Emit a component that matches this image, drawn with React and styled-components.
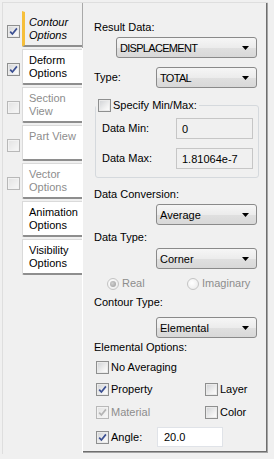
import React from 'react';
import styled, { createGlobalStyle } from 'styled-components';

const GlobalStyle = createGlobalStyle`
  html, body {
    margin: 0;
    padding: 0;
    background: #f0f0f0;
  }
  body {
    font-family: "Liberation Sans", Arial, sans-serif;
    font-size: 11px;
    color: #000;
  }
`;

const Frame = styled.div`
  margin: 2px 0 0 2px;
  width: 266px;
  height: 452px;
  box-sizing: border-box;
  border-left: 1px solid #dedede;
  border-top: 1px solid #dedede;
  display: flex;
`;

const TabColumn = styled.div`
  width: 79px;
  flex: none;
  padding-top: 8px;
  box-sizing: border-box;
`;

const TabRow = styled.div`
  display: grid;
  grid-template-columns: 13px 60px;
  column-gap: 2px;
  padding-left: 4px;
  height: 38px;
`;

const Tab = styled.div`
  height: 36px;
  box-sizing: border-box;
  padding: 4px 0 0 ${p => (p.$active ? 4 : 6)}px;
  line-height: 13px;
  background: ${p => (p.$active ? '#f0f0f0' : '#ffffff')};
  border-top: 1px solid ${p => (p.$active ? '#f0f0f0' : '#dadada')};
  border-left: ${p => (p.$active ? '3px solid #f6bf3a' : '1px solid #dadada')};
  border-bottom: 2px solid #8e8e8e;
  border-bottom-left-radius: 2px;
  font-style: ${p => (p.$active ? 'italic' : 'normal')};
  color: ${p => (p.$disabled ? '#8d8d8d' : '#000')};
`;

const Panel = styled.div`
  width: 186px;
  height: 450px;
  flex: none;
  box-sizing: border-box;
  border-left: 1px solid;
  border-image: linear-gradient(to bottom, #a9a9a9 46px, #ffffff 46px) 1;
  box-shadow: inset -1px -1px 0 #a4a4a4, inset -2px -2px 0 #6e6e6e;
`;

const Content = styled.div`
  display: flex;
  flex-direction: column;
  padding: 18px 11px 0 11px;
`;

const Label = styled.div`
  line-height: 13px;
  height: 13px;
  white-space: nowrap;
  margin-top: ${p => p.$mt || 0}px;
  color: ${p => (p.$disabled ? '#8d8d8d' : '#000')};
`;

const SelectBox = styled.div`
  align-self: flex-end;
  flex: none;
  width: ${p => p.$w}px;
  height: 21px;
  box-sizing: border-box;
  margin-top: ${p => p.$mt || 0}px;
  border: 1px solid #8a8a8a;
  border-radius: 3px;
  background: linear-gradient(#f6f6f6, #ececec 50%, #e0e0e0 51%, #d8d8d8);
  display: flex;
  align-items: center;
  justify-content: space-between;
  padding: 0 7px 0 3px;
  letter-spacing: ${p => (p.$tight ? '-0.7px' : '0')};
  white-space: nowrap;
`;

const Arrow = styled.svg`
  margin-top: 1px;
  flex: none;
`;

const FieldRow = styled.div`
  display: flex;
  align-items: center;
  justify-content: space-between;
  height: 21px;
  margin-top: ${p => p.$mt || 0}px;
`;

const Group = styled.div`
  display: flex;
  flex-direction: column;
  margin: 17px -2px 0 1px;
  border: 1px solid #d5d9dd;
  border-radius: 3px;
  padding: 0 5px 8px 0;
`;

const Legend = styled.div`
  align-self: flex-start;
  display: flex;
  align-items: center;
  gap: 2px;
  height: 13px;
  line-height: 13px;
  margin-top: -7px;
  padding: 0 2px;
  background: #f0f0f0;
`;

const GroupRow = styled.div`
  display: grid;
  grid-template-columns: 74px 1fr;
  align-items: center;
  padding-left: 6px;
  margin-top: ${p => p.$mt || 0}px;
`;

const Input = styled.div`
  height: ${p => p.$h || 21}px;
  box-sizing: border-box;
  border: 1px solid ${p => (p.$readOnly ? '#c6c6c6' : '#e0e3e8')};
  background: ${p => (p.$readOnly ? '#f0f0f0' : '#ffffff')};
  padding-left: ${p => p.$pad || 5}px;
  display: flex;
  align-items: center;
  width: ${p => (p.$w ? `${p.$w}px` : 'auto')};
`;

const RadioRow = styled.div`
  display: grid;
  grid-template-columns: 80px auto;
  padding-left: 13px;
  height: 13px;
  margin-top: ${p => p.$mt || 0}px;
`;

const Item = styled.div`
  display: flex;
  align-items: center;
  gap: ${p => p.$gap || 2}px;
  line-height: 13px;
  white-space: nowrap;
  color: ${p => (p.$disabled ? '#8d8d8d' : '#000')};
`;

const RadioDot = styled.span`
  width: 12px;
  height: 12px;
  flex: none;
  box-sizing: border-box;
  border-radius: 50%;
  border: 1px solid #c4c4c4;
  background: radial-gradient(circle at 40% 40%, #ffffff, #e8e8e8);
  display: flex;
  align-items: center;
  justify-content: center;

  &::after {
    content: '';
    width: 6px;
    height: 6px;
    border-radius: 50%;
    background: radial-gradient(circle at 40% 40%, #d0d0d0, #9a9a9a);
    display: ${p => (p.$on ? 'block' : 'none')};
  }
`;

const CheckGrid = styled.div`
  display: grid;
  grid-template-columns: ${p => p.$cols || '109px auto'};
  align-items: center;
  padding-left: 2px;
  height: ${p => p.$h || 13}px;
  margin-top: ${p => p.$mt || 0}px;
`;

const Box = styled.span`
  flex: none;
  width: 13px;
  height: 13px;
  box-sizing: border-box;
  margin-top: ${p => p.$mt || 0}px;
  border: 1px solid ${p => (p.$dim ? '#b8b8b8' : '#8e8f8f')};
  background: ${p =>
    p.$dim
      ? 'linear-gradient(135deg, #e2e2e2, #f8f8f8)'
      : 'linear-gradient(135deg, #cfd1d4, #f2f2f2 65%, #ffffff)'};
  box-shadow: inset 0 0 0 1px ${p => (p.$dim ? '#f2f2f2' : '#eaeaea')};
  display: flex;
  align-items: center;
  justify-content: center;
`;

function CheckBox({ checked, dim, mt }) {
  return (
    <Box $dim={dim} $mt={mt}>
      {checked && (
        <svg width="9" height="9" viewBox="0 0 9 9">
          <path
            d="M1.2 4.6 L3.4 7 L7.9 1.4"
            fill="none"
            stroke={dim ? '#b4b4b4' : '#3b4f92'}
            strokeWidth="1.7"
          />
        </svg>
      )}
    </Box>
  );
}

function Select({ w, mt, tight, children }) {
  return (
    <SelectBox $w={w} $mt={mt} $tight={tight}>
      <span>{children}</span>
      <Arrow width="7" height="4" viewBox="0 0 7 4">
        <path d="M0 0H7L3.5 4Z" fill="#000" />
      </Arrow>
    </SelectBox>
  );
}

const tabs = [
  { lines: ['Contour', 'Options'], box: 'on', active: true },
  { lines: ['Deform', 'Options'], box: 'on' },
  { lines: ['Section', 'View'], box: 'dim', disabled: true },
  { lines: ['Part View'], box: 'dim', disabled: true },
  { lines: ['Vector', 'Options'], box: 'dim', disabled: true },
  { lines: ['Animation', 'Options'] },
  { lines: ['Visibility', 'Options'] },
];

export default function App() {
  return (
    <>
      <GlobalStyle />
      <Frame>
        <TabColumn>
          {tabs.map(t => (
            <TabRow key={t.lines.join(' ')}>
              {t.box ? <CheckBox checked={t.box === 'on'} dim={t.box === 'dim'} mt={14} /> : <span />}
              <Tab $active={t.active} $disabled={t.disabled}>
                {t.lines.map(l => (
                  <div key={l}>{l}</div>
                ))}
              </Tab>
            </TabRow>
          ))}
        </TabColumn>

        <Panel>
          <Content>
            <Label>Result Data:</Label>
            <Select w={141} mt={3} tight>DISPLACEMENT</Select>

            <FieldRow $mt={9}>
              <Label>Type:</Label>
              <Select w={101} tight>TOTAL</Select>
            </FieldRow>

            <Group>
              <Legend>
                <CheckBox />
                <span>Specify Min/Max:</span>
              </Legend>
              <GroupRow $mt={6}>
                <Label>Data Min:</Label>
                <Input $readOnly>0</Input>
              </GroupRow>
              <GroupRow $mt={9}>
                <Label>Data Max:</Label>
                <Input $readOnly>1.81064e-7</Input>
              </GroupRow>
            </Group>

            <Label $mt={10}>Data Conversion:</Label>
            <Select w={101} mt={3}>Average</Select>

            <Label $mt={6}>Data Type:</Label>
            <Select w={101} mt={4}>Corner</Select>

            <RadioRow $mt={8}>
              <Item $gap={3} $disabled>
                <RadioDot $on />
                Real
              </Item>
              <Item $gap={3} $disabled>
                <RadioDot />
                Imaginary
              </Item>
            </RadioRow>

            <Label $mt={6}>Contour Type:</Label>
            <Select w={101} mt={8}>Elemental</Select>

            <Label $mt={3}>Elemental Options:</Label>

            <CheckGrid $mt={7}>
              <Item>
                <CheckBox />
                No Averaging
              </Item>
            </CheckGrid>

            <CheckGrid $mt={9}>
              <Item>
                <CheckBox checked />
                Property
              </Item>
              <Item>
                <CheckBox />
                Layer
              </Item>
            </CheckGrid>

            <CheckGrid $mt={10}>
              <Item $disabled>
                <CheckBox checked dim />
                Material
              </Item>
              <Item>
                <CheckBox />
                Color
              </Item>
            </CheckGrid>

            <CheckGrid $mt={8} $h={20} $cols="61px 66px">
              <Item>
                <CheckBox checked />
                Angle:
              </Item>
              <Input $h={20} $pad={6}>20.0</Input>
            </CheckGrid>
          </Content>
        </Panel>
      </Frame>
    </>
  );
}
